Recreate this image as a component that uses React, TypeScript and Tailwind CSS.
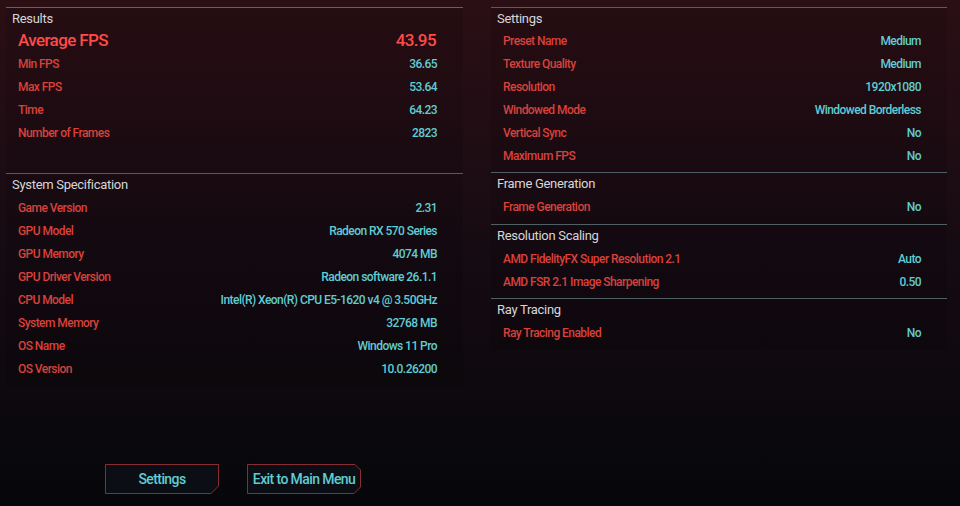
import React from "react";

type Row = [string, string];

const font = { fontFamily: "Roboto, 'Noto Sans', sans-serif" };

function Header({ title, h = "h-[22px]" }: { title: string; h?: string }) {
  return (
    <div className={h + " flex items-center px-[6px] text-[13px] text-[#d6d6d8] tracking-[-0.3px]"}>
      {title}
    </div>
  );
}

function Rows({ rows }: { rows: Row[] }) {
  return (
    <>
      {rows.map(([k, v]) => (
        <div key={k} className="h-[23px] flex items-center justify-between pl-[12px] pr-[26px] text-[12px] font-medium tracking-[-0.55px]">
          <span className="text-[#d9413b]">{k}</span>
          <span className="text-[#5fcdd3]">{v}</span>
        </div>
      ))}
    </>
  );
}

function Section({ title, rows, className = "", h }: { title: string; rows: Row[]; className?: string; h?: string }) {
  return (
    <div className={"border-t border-[#4f5f66] bg-black/10 " + className}>
      <Header title={title} h={h} />
      <Rows rows={rows} />
    </div>
  );
}

function CutButton({ label, both }: { label: string; both?: boolean }) {
  const w = 114;
  const h = 30;
  const pts = both
    ? `0.5,0.5 ${w - 6},0.5 ${w - 0.5},6 ${w - 0.5},${h - 7} ${w - 7},${h - 0.5} 0.5,${h - 0.5}`
    : `0.5,0.5 ${w - 0.5},0.5 ${w - 0.5},${h - 8} ${w - 8},${h - 0.5} 0.5,${h - 0.5}`;
  return (
    <div className="relative w-[114px] h-[30px] flex items-center justify-center text-[14px] text-[#5fcdd3] font-medium tracking-[-0.6px]">
      <svg className="absolute inset-0" width={w} height={h} viewBox={`0 0 ${w} ${h}`}>
        <polygon points={pts} fill="#0c0e16" stroke="#8a2c33" strokeWidth="1" />
      </svg>
      <span className="relative">{label}</span>
    </div>
  );
}

export default function App() {
  return (
    <div
      style={font}
      className="w-[960px] h-[506px] overflow-hidden flex flex-col pt-[7px] bg-gradient-to-b from-[#2b0f15] via-[#160b12] to-[#06070b]"
    >
      <div className="flex">
        <div className="w-[457px] ml-[6px] flex flex-col">
          <div className="border-t border-[#56666c] bg-black/10 h-[166px]">
            <Header title="Results" />
            <div className="h-[22px] flex items-center justify-between pl-[12px] pr-[27px] text-[17px] font-medium text-[#ff4a4a] tracking-[-0.6px]">
              <span>Average FPS</span>
              <span>43.95</span>
            </div>
            <Rows
              rows={[
                ["Min FPS", "36.65"],
                ["Max FPS", "53.64"],
                ["Time", "64.23"],
                ["Number of Frames", "2823"],
              ]}
            />
          </div>
          <Section
            title="System Specification"
            rows={[
              ["Game Version", "2.31"],
              ["GPU Model", "Radeon RX 570 Series"],
              ["GPU Memory", "4074 MB"],
              ["GPU Driver Version", "Radeon software 26.1.1"],
              ["CPU Model", "Intel(R) Xeon(R) CPU E5-1620 v4 @ 3.50GHz"],
              ["System Memory", "32768 MB"],
              ["OS Name", "Windows 11 Pro"],
              ["OS Version", "10.0.26200"],
            ]}
            className="pb-[6px]"
          />
        </div>
        <div className="w-[456px] ml-[28px] flex flex-col">
          <Section
            title="Settings"
            h="h-[21px]"
            rows={[
              ["Preset Name", "Medium"],
              ["Texture Quality", "Medium"],
              ["Resolution", "1920x1080"],
              ["Windowed Mode", "Windowed Borderless"],
              ["Vertical Sync", "No"],
              ["Maximum FPS", "No"],
            ]}
            className="h-[165px]"
          />
          <Section title="Frame Generation" rows={[["Frame Generation", "No"]]} className="h-[52px]" />
          <Section
            title="Resolution Scaling"
            rows={[
              ["AMD FidelityFX Super Resolution 2.1", "Auto"],
              ["AMD FSR 2.1 Image Sharpening", "0.50"],
            ]}
            className="h-[74px]"
          />
          <Section title="Ray Tracing" rows={[["Ray Tracing Enabled", "No"]]} className="h-[52px]" />
        </div>
      </div>
      <div className="flex-1" />
      <div className="flex gap-[28px] pl-[105px] pb-[12px]">
        <CutButton label="Settings" />
        <CutButton label="Exit to Main Menu" both />
      </div>
    </div>
  );
}
